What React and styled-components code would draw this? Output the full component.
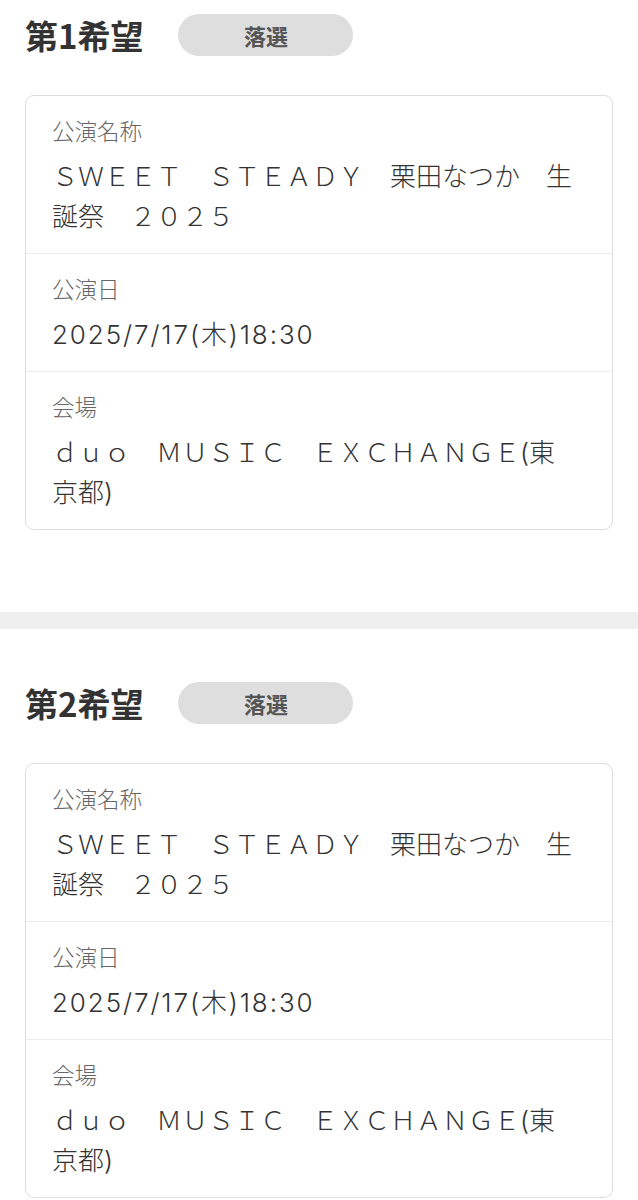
import React from "react";
import styled, { createGlobalStyle } from "styled-components";

const GlobalStyle = createGlobalStyle`
  html, body {
    margin: 0;
    padding: 0;
    background: #ffffff;
  }
  body {
    font-family: "Noto Sans CJK JP", "Noto Sans", sans-serif;
    color: #333333;
    -webkit-font-smoothing: antialiased;
  }
`;

const Page = styled.div`
  width: 638px;
  background: #ffffff;
`;

const Section = styled.section`
  padding: ${(p) => p.$top}px 25px ${(p) => p.$bottom}px 25px;
`;

const Band = styled.div`
  height: 17px;
  background: #efefef;
`;

const HeadRow = styled.div`
  display: flex;
  align-items: center;
  gap: 35px;
  height: 42px;
  margin-bottom: 39px;
`;

const Title = styled.h2`
  margin: 0;
  font-family: "Noto Sans CJK JP", sans-serif;
  font-size: 33px;
  font-weight: 700;
  line-height: 42px;
  color: #333333;
`;

const Badge = styled.span`
  display: inline-flex;
  align-items: center;
  justify-content: center;
  width: 175px;
  height: 42px;
  border-radius: 21px;
  background: #dedede;
  color: #555555;
  font-family: "Noto Sans CJK JP", sans-serif;
  font-size: 22px;
  font-weight: 700;
`;

const Card = styled.div`
  border: 1.5px solid #dddddd;
  border-radius: 9px;
  background: #ffffff;
  overflow: hidden;
`;

const Row = styled.div`
  padding: 17px 36px 16px 26px;
  & + & {
    border-top: 1.5px solid #ececec;
  }
`;

const Label = styled.div`
  font-family: "Noto Sans CJK JP", sans-serif;
  font-size: 22.5px;
  font-weight: 300;
  line-height: 34px;
  color: #666666;
  margin-bottom: 10px;
`;

const Value = styled.div`
  font-family: Inter, "Noto Sans CJK JP", sans-serif;
  font-size: 26px;
  font-weight: 300;
  line-height: 40px;
  letter-spacing: ${(p) => (p.$wide ? "1.9px" : "0")};
  color: #333333;
`;

const entries = [
  { rank: "第1希望", top: 14, bottom: 82 },
  { rank: "第2希望", top: 53, bottom: 40 },
];

const details = [
  { label: "公演名称", value: "ＳＷＥＥＴ　ＳＴＥＡＤＹ　栗田なつか　生誕祭　２０２５" },
  { label: "公演日", value: "2025/7/17(木)18:30", wide: true },
  { label: "会場", value: "ｄｕｏ　ＭＵＳＩＣ　ＥＸＣＨＡＮＧＥ(東京都)" },
];

function Entry({ rank, top, bottom }) {
  return (
    <Section $top={top} $bottom={bottom}>
      <HeadRow>
        <Title>{rank}</Title>
        <Badge>落選</Badge>
      </HeadRow>
      <Card>
        {details.map((d) => (
          <Row key={d.label}>
            <Label>{d.label}</Label>
            <Value $wide={d.wide}>{d.value}</Value>
          </Row>
        ))}
      </Card>
    </Section>
  );
}

export default function App() {
  return (
    <>
      <GlobalStyle />
      <Page>
        <Entry {...entries[0]} />
        <Band />
        <Entry {...entries[1]} />
      </Page>
    </>
  );
}
